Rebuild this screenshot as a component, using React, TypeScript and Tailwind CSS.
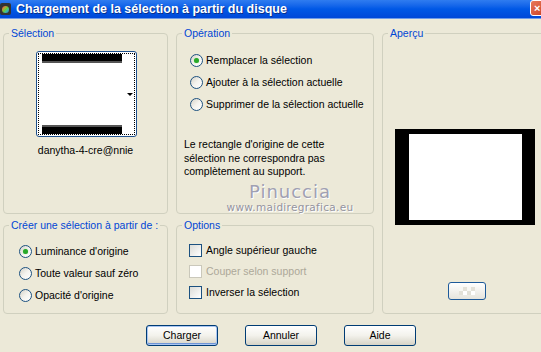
import React from "react";

const font = { fontFamily: '"Liberation Sans", Arial, sans-serif' };

function Radio({ checked, label }: { checked?: boolean; label: string }) {
  return (
    <div className="flex items-center h-[22px]">
      <span className="w-[13px] h-[13px] rounded-full border border-[#1c5180] bg-gradient-to-br from-[#d6d3c9] via-[#f4f3ee] to-white flex items-center justify-center shrink-0">
        {checked && <span className="w-[5px] h-[5px] rounded-full bg-[#29a829] shadow-[0_0_1px_#7ee07e]" />}
      </span>
      <span className="ml-[3px] text-[10.5px] leading-[13px] text-black whitespace-nowrap">{label}</span>
    </div>
  );
}

function Check({ label, disabled }: { label: string; disabled?: boolean }) {
  return (
    <div className="flex items-center h-[21px]">
      <span
        className={
          disabled
            ? "w-[13px] h-[13px] border border-[#cac8bb] bg-white shrink-0"
            : "w-[13px] h-[13px] border border-[#1c5180] bg-gradient-to-br from-[#dcdcd7] to-white shrink-0"
        }
      />
      <span
        className={`ml-[4px] text-[10.5px] leading-[13px] whitespace-nowrap ${
          disabled ? "text-[#aca899]" : "text-black"
        }`}
      >
        {label}
      </span>
    </div>
  );
}

function Group({ title, className, children }: { title: string; className?: string; children?: React.ReactNode }) {
  return (
    <fieldset className={`border border-[#d0d0bf] rounded-[4px] min-w-0 ${className ?? ""}`}>
      <legend className="ml-[5px] px-[2px] text-[10.5px] leading-[13px] text-[#0046d5] whitespace-nowrap">
        {title}
      </legend>
      {children}
    </fieldset>
  );
}

function XpButton({ label, focused }: { label: string; focused?: boolean }) {
  return (
    <div
      className={`w-[72px] h-[21px] rounded-[3px] border border-[#003c74] bg-gradient-to-b from-white via-[#f3f2ec] to-[#d6d3c6] flex items-center justify-center text-[10.5px] text-black ${
        focused ? "shadow-[inset_0_0_0_1px_#aac6f2,inset_0_-1px_0_1px_#6f95d6]" : ""
      }`}
    >
      {label}
    </div>
  );
}

export default function App() {
  return (
    <div className="relative w-[541px] h-[352px] overflow-hidden bg-[#ece9d8]" style={font}>
      {/* title bar */}
      <div className="h-[18px] bg-gradient-to-b from-[#2f7cf0] via-[#0058e6] to-[#0048d8] flex items-center relative">
        <span className="w-[11px] h-[12px] rounded-[2px] bg-[#333] flex items-center justify-center">
          <span className="w-[7px] h-[7px] rounded-full bg-gradient-to-br from-[#e04] via-[#6c3] to-[#28f]" />
        </span>
        <span className="ml-[5px] text-white font-bold text-[12.5px] leading-[16px] [text-shadow:1px_1px_0_#0a2f8a]">
          Chargement de la sélection à partir du disque
        </span>
        <span className="absolute right-[-8px] top-[0px] w-[19px] h-[16px] rounded-[3px] border border-white bg-gradient-to-br from-[#e8785a] to-[#c9391a] flex items-center pl-[3px] text-white text-[11px] font-bold leading-none">
          ×
        </span>
      </div>
      <div className="h-px bg-[#6f9be8]" />

      <div className="pl-[3px] pt-[8px]">
        <div className="grid grid-cols-[165px_198px_170px] grid-rows-[187px_95px] gap-x-[8px] gap-y-[5px]">
          <Group title="Sélection">
            <div className="flex flex-col items-start pl-[32px] pt-[11px]">
              <div className="relative w-[101px] h-[86px] rounded-[3px] border border-[#1d4f8c] bg-white p-[1px]">
                <div className="w-full h-full border border-dotted border-black flex">
                  <div className="flex flex-col justify-between w-[80px] ml-[3px]">
                    <div className="h-[9px] bg-black border-b-2 border-[#555]" />
                    <div className="h-[9px] bg-black border-t-2 border-[#555]" />
                  </div>
                  <div className="flex-1 flex items-center justify-end pr-[1px]">
                    <span className="w-0 h-0 border-l-[3px] border-r-[3px] border-t-[3px] border-l-transparent border-r-transparent border-t-black" />
                  </div>
                </div>
              </div>
              <div className="mt-[7px] w-[101px] text-center text-[10.5px] leading-[13px] text-black whitespace-nowrap -ml-[1px]">
                danytha-4-cre@nnie
              </div>
            </div>
          </Group>

          <Group title="Opération">
            <div className="pl-[13px] pt-[9px]">
              <Radio checked label="Remplacer la sélection" />
              <Radio label="Ajouter à la sélection actuelle" />
              <Radio label="Supprimer de la sélection actuelle" />
            </div>
            <p className="mt-[23px] pl-[7px] text-[10.5px] leading-[13.5px] text-black">
              Le rectangle d'origine de cette
              <br />
              sélection ne correspondra pas
              <br />
              complètement au support.
            </p>
          </Group>

          <Group title="Aperçu" className="row-span-2">
            <div className="pl-[12px] pt-[89px]">
              <div className="w-[140px] h-[96px] bg-black pl-[14px] pt-[5px]">
                <div className="w-[113px] h-[86px] bg-white" />
              </div>
              <div className="ml-[53px] mt-[57px] w-[38px] h-[18px] rounded-[3px] border border-[#1d5a9a] bg-gradient-to-b from-white to-[#e6e4dc] grid grid-cols-[4px_4px_4px_4px] grid-rows-[4px_4px] content-center justify-center">
                <span className="bg-[#f7f7f3]" />
                <span className="bg-[#e3e1d8]" />
                <span className="bg-[#f7f7f3]" />
                <span className="bg-[#e3e1d8]" />
                <span className="bg-[#e3e1d8]" />
                <span className="bg-white" />
                <span className="bg-[#e3e1d8]" />
                <span className="bg-white" />
              </div>
            </div>
          </Group>

          <Group title="Créer une sélection à partir de :">
            <div className="pl-[15px] pt-[8px]">
              <Radio checked label="Luminance d'origine" />
              <Radio label="Toute valeur sauf zéro" />
              <Radio label="Opacité d'origine" />
            </div>
          </Group>

          <Group title="Options">
            <div className="pl-[12px] pt-[8px]">
              <Check label="Angle supérieur gauche" />
              <Check label="Couper selon support" disabled />
              <Check label="Inverser la sélection" />
            </div>
          </Group>
        </div>

        <div className="flex gap-[27px] pl-[143px] mt-[11px]">
          <XpButton label="Charger" focused />
          <XpButton label="Annuler" />
          <XpButton label="Aide" />
        </div>
      </div>

      {/* watermark over the dialog */}
      <div className="absolute left-[226px] top-[183px] w-[128px] flex flex-col items-center pointer-events-none">
        <span
          className="text-[18px] leading-[18px] tracking-[1px] text-[#a0a0b2] [text-shadow:1px_1px_0_#ffffff]"
          style={{ fontFamily: '"DejaVu Sans", sans-serif' }}
        >
          Pinuccia
        </span>
        <span
          className="text-[10.5px] leading-[13px] tracking-[0.3px] text-[#94949f] [text-shadow:1px_1px_0_#ffffff]"
          style={{ fontFamily: '"DejaVu Sans", sans-serif' }}
        >
          www.maidiregrafica.eu
        </span>
      </div>
    </div>
  );
}
